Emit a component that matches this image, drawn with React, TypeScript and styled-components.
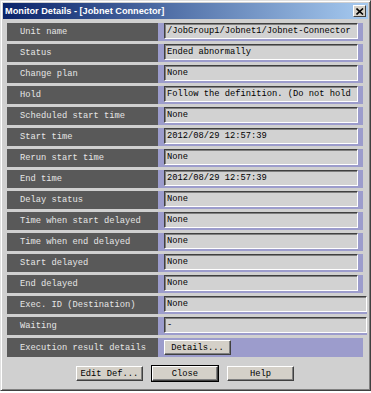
import React from "react";
import styled, { createGlobalStyle } from "styled-components";

const Global = createGlobalStyle`
  html, body { margin: 0; padding: 0; background: #ffffff; }
  * { box-sizing: border-box; }
`;

const Window = styled.div`
  width: 371px;
  height: 391px;
  background: #d0d0d0;
  border-top: 1px solid #e0e0e0;
  border-left: 1px solid #e0e0e0;
  border-right: 1px solid #404040;
  border-bottom: 1px solid #404040;
  box-shadow: inset 1px 1px 0 #ffffff, inset -1px -1px 0 #808080;
  padding: 2px;
  display: flex;
  flex-direction: column;
`;

const TitleBar = styled.div`
  height: 16px;
  background: linear-gradient(to right, #0a246a, #a6caf0);
  display: flex;
  align-items: center;
  justify-content: space-between;
  padding: 0 2px 0 2px;
`;

const Title = styled.span`
  color: #ffffff;
  font-family: "Liberation Sans", Arial, sans-serif;
  font-weight: bold;
  font-size: 9.2px;
  white-space: nowrap;
`;

const CloseBox = styled.div`
  width: 13px;
  height: 12px;
  background: #d4d0c8;
  border-top: 1px solid #ffffff;
  border-left: 1px solid #ffffff;
  border-right: 1px solid #404040;
  border-bottom: 1px solid #404040;
  display: flex;
  align-items: center;
  justify-content: center;
`;

const Body = styled.div`
  flex: 1;
  display: flex;
  flex-direction: column;
  padding: 4px 0 0 4px;
`;

const Table = styled.div`
  display: flex;
  flex-direction: column;
  gap: 3px;
  width: 360px;
`;

const Row = styled.div`
  display: grid;
  grid-template-columns: 151px 1fr;
  height: 18px;
`;

const Label = styled.div`
  background: #595959;
  color: #e6e6e6;
  font-family: "Liberation Mono", "Courier New", monospace;
  font-size: 8.75px;
  padding-left: 13px;
  display: flex;
  align-items: center;
  white-space: nowrap;
`;

const ValueCell = styled.div<{ $wide?: boolean }>`
  background: #9c9ccc;
  margin-right: ${(p) => (p.$wide ? "0" : "4px")};
  padding: 0 ${(p) => (p.$wide ? "0" : "5px")} 2px 6px;
  display: flex;
  align-items: stretch;
`;

const ValueBox = styled.div`
  flex: 1;
  background: #d2d2d2;
  border-top: 1px solid #404040;
  border-left: 1px solid #404040;
  border-right: 1px solid #ffffff;
  border-bottom: 1px solid #ffffff;
  box-shadow: inset 1px 1px 0 #808080;
  font-family: "Liberation Mono", "Courier New", monospace;
  font-size: 8.75px;
  color: #000000;
  padding-left: 2px;
  display: flex;
  align-items: center;
  white-space: nowrap;
  overflow: hidden;
`;

const ActionCell = styled.div`
  background: #9c9ccc;
  margin-right: 4px;
  padding: 2px 0 2px 6px;
  display: flex;
  align-items: stretch;
  height: 19px;
`;

const Button = styled.button<{ $w: number }>`
  width: ${(p) => p.$w}px;
  height: 15px;
  padding: 0;
  margin: 0;
  background: #d4d0c8;
  border-top: 1px solid #ffffff;
  border-left: 1px solid #ffffff;
  border-right: 1px solid #404040;
  border-bottom: 1px solid #404040;
  box-shadow: inset -1px -1px 0 #808080;
  font-family: "Liberation Mono", "Courier New", monospace;
  font-size: 8.75px;
  color: #000000;
  display: flex;
  align-items: center;
  justify-content: center;
  white-space: nowrap;
`;

const FocusButton = styled(Button)`
  outline: 1px solid #000000;
`;

const Footer = styled.div`
  display: flex;
  justify-content: flex-start;
  gap: 9px;
  padding-left: 69px;
  margin-top: 10px;
`;

const rows: { label: string; value: string; wide?: boolean }[] = [
  { label: "Unit name", value: "/JobGroup1/Jobnet1/Jobnet-Connector" },
  { label: "Status", value: "Ended abnormally" },
  { label: "Change plan", value: "None" },
  { label: "Hold", value: "Follow the definition. (Do not hold" },
  { label: "Scheduled start time", value: "None" },
  { label: "Start time", value: "2012/08/29 12:57:39" },
  { label: "Rerun start time", value: "None" },
  { label: "End time", value: "2012/08/29 12:57:39" },
  { label: "Delay status", value: "None" },
  { label: "Time when start delayed", value: "None" },
  { label: "Time when end delayed", value: "None" },
  { label: "Start delayed", value: "None" },
  { label: "End delayed", value: "None" },
  { label: "Exec. ID (Destination)", value: "None", wide: true },
  { label: "Waiting", value: "-", wide: true },
];

export default function App() {
  return (
    <>
      <Global />
      <Window>
        <TitleBar>
          <Title>Monitor Details - [Jobnet Connector]</Title>
          <CloseBox>
            <svg width="8" height="7" viewBox="0 0 8 7">
              <path d="M0.5 0.5 L7 6.5 M7 0.5 L0.5 6.5" stroke="#000" strokeWidth="1.6" />
            </svg>
          </CloseBox>
        </TitleBar>
        <Body>
          <Table>
            {rows.map((r) => (
              <Row key={r.label}>
                <Label>{r.label}</Label>
                <ValueCell $wide={r.wide}>
                  <ValueBox>{r.value}</ValueBox>
                </ValueCell>
              </Row>
            ))}
            <Row>
              <Label>Execution result details</Label>
              <ActionCell>
                <Button $w={67}>Details...</Button>
              </ActionCell>
            </Row>
          </Table>
          <Footer>
            <Button $w={67}>Edit Def...</Button>
            <FocusButton $w={66}>Close</FocusButton>
            <Button $w={67}>Help</Button>
          </Footer>
        </Body>
      </Window>
    </>
  );
}
